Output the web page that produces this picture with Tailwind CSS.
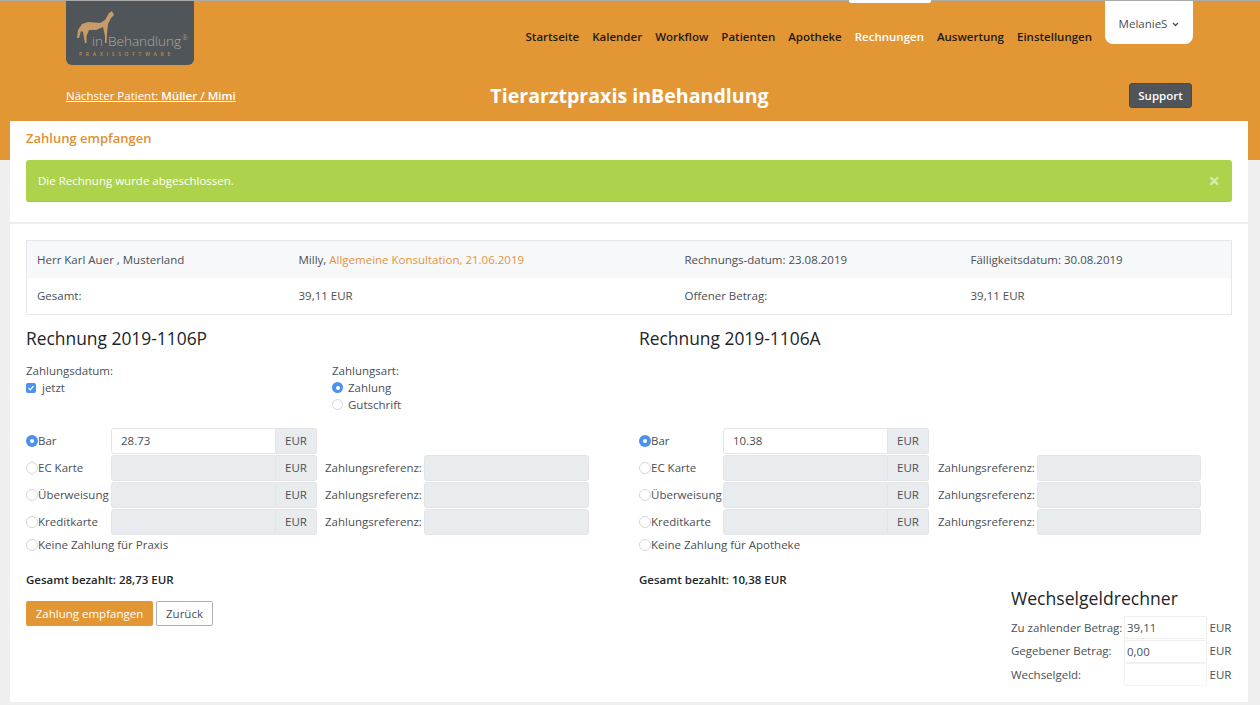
<!DOCTYPE html>
<html lang="de">
<head>
    <meta charset="UTF-8">
    <title>Zahlung empfangen</title>
    <script src="https://cdn.jsdelivr.net/npm/@tailwindcss/browser@4"></script>
</head>
<body class="bg-[#efefef] h-[705px] overflow-hidden font-['Open_Sans',sans-serif] text-[11.5px] text-[#4a4f55]">

    <!-- Kopfzeile -->
    <header class="h-[160px] bg-[#e39734] border-t border-[#aaaaaa] pl-[66px] pr-[67px]">
        <div class="flex h-[72px] items-start">
            <!-- Logo -->
            <div class="relative w-[128px] h-[64px] bg-[#50555a] rounded-b-[6px] text-[#b3a998] shrink-0">
                <svg width="40" height="35" viewBox="0 0 40 35" class="absolute left-[10px] top-[9px]">
                    <path d="M38 5 L36 1 L33 3 L29 10 L24 13 L12 12 L6 14 L2 20 L1 28 L3 28 L5 21 L7 22 L8 28 L9 33 L10.5 33 L10.5 26 L13 20 L20 20 L27 17 L29 26 L29 33 L30.5 33 L31 24 L32 14 L35 8 Z" fill="#c79c67"/>
                </svg>
                <div class="absolute left-[26px] top-[31px] flex text-[13.5px] leading-[18px] font-light whitespace-nowrap">
                    <span>in</span><span class="ml-[5px]">Behandlung</span><span class="text-[7px] leading-[10px] ml-[1px] mt-[1px]">®</span>
                </div>
                <div class="absolute left-[13px] top-[50px] text-[5px] leading-[7px] tracking-[3.7px] text-[#b8924f] font-semibold whitespace-nowrap">PRAXISSOFTWARE</div>
            </div>

            <!-- Navigation -->
            <nav class="ml-auto flex items-center gap-[13px] font-semibold text-[#1f1a14] mr-[13px] h-[71px] whitespace-nowrap">
                <a>Startseite</a>
                <a>Kalender</a>
                <a>Workflow</a>
                <a>Patienten</a>
                <a>Apotheke</a>
                <a class="relative text-white">Rechnungen
                    <span class="absolute left-[-6px] top-[-29px] w-[82px] h-[4px] bg-white rounded-b-[2px]"></span>
                </a>
                <a>Auswertung</a>
                <a>Einstellungen</a>
            </nav>
            <div class="w-[88px] h-[43px] bg-white rounded-b-[8px] flex items-center justify-center gap-[5px] pt-[3px] text-[#4a4f55]">
                MelanieS
                <svg width="7" height="5" viewBox="0 0 7 5"><path d="M1 1 L3.5 3.5 L6 1" fill="none" stroke="#4a4f55" stroke-width="1.3"/></svg>
            </div>
        </div>
        <div class="grid grid-cols-[1fr_auto_1fr] items-center h-[25px] mt-[8px]">
            <a class="text-white underline font-medium">Nächster Patient: <b class="font-semibold">Müller / Mimi</b></a>
            <div class="text-white text-[19.6px] font-bold">Tierarztpraxis inBehandlung</div>
            <div class="flex justify-end">
                <button class="w-[63px] h-[25px] mr-[1px] bg-[#50555a] text-white font-semibold rounded-[3px] border border-[#454a4e]">Support</button>
            </div>
        </div>
    </header>

    <!-- Inhalt -->
    <main class="relative -mt-[39px] ml-[10px] w-[1238px] h-[581px] bg-white">
        <div class="px-[16px]">
            <h1 class="h-[39px] pt-[7px] text-[#e08f33] text-[13px] font-semibold leading-[20px]">Zahlung empfangen</h1>
            <div class="h-[42px] bg-[#acd34b] border-b border-[#9fd02c] rounded-[3px] flex items-center justify-between pl-[12px] pr-[12px] pt-[1px] text-white">
                <span>Die Rechnung wurde abgeschlossen.</span>
                <span class="text-[#dcebb6] text-[20px] font-bold leading-none">×</span>
            </div>
        </div>
        <div class="border-b-2 border-[#eeeeee] h-[22px]"></div>

        <div class="px-[16px] pt-[16px]">
            <!-- Rechnungsdaten -->
            <table class="w-[1206px] border border-[#e5e7ea] table-fixed">
                <tbody>
                    <tr class="bg-[#f7f8f9] h-[37px]">
                        <td class="w-[262px] pl-[10px]">Herr Karl Auer , Musterland</td>
                        <td class="w-[386px] pl-[10px]">Milly, <a class="text-[#e8923c]">Allgemeine Konsultation, 21.06.2019</a></td>
                        <td class="w-[286px] pl-[10px]">Rechnungs-datum: 23.08.2019</td>
                        <td class="pl-[10px]">Fälligkeitsdatum: 30.08.2019</td>
                    </tr>
                    <tr class="h-[37px]">
                        <td class="pl-[10px]">Gesamt:</td>
                        <td class="pl-[10px]">39,11 EUR</td>
                        <td class="pl-[10px]">Offener Betrag:</td>
                        <td class="pl-[10px]">39,11 EUR</td>
                    </tr>
                </tbody>
            </table>

            <div class="grid grid-cols-[613px_593px]">
                <!-- Praxis -->
                <section>
                    <h2 class="text-[17.4px] leading-[24px] text-[#212529] mt-[11px]">Rechnung 2019-1106P</h2>
                    <div class="flex mt-[12px] h-[53px] leading-[17px]">
                        <div class="w-[306px]">
                            <div>Zahlungsdatum:</div>
                            <label class="flex items-center gap-[6px]">
                                <span class="w-[10px] h-[10px] rounded-[2px] bg-[#4d90f0] flex items-center justify-center">
                                    <svg width="8" height="8" viewBox="0 0 8 8"><path d="M1.5 4 L3.3 5.8 L6.5 2" fill="none" stroke="#fff" stroke-width="1.2"/></svg>
                                </span>
                                jetzt
                            </label>
                        </div>
                        <div>
                            <div>Zahlungsart:</div>
                            <label class="flex items-center gap-[5px]">
                                <span class="w-[11px] h-[11px] rounded-full bg-[#4d90f0] flex items-center justify-center"><span class="w-[4px] h-[4px] rounded-full bg-white"></span></span>
                                Zahlung
                            </label>
                            <label class="flex items-center gap-[5px]">
                                <span class="w-[11px] h-[11px] rounded-full border border-[#d5d7da]"></span>
                                Gutschrift
                            </label>
                        </div>
                    </div>
                    <div class="mt-[13px] flex flex-col gap-[1px]">
                        <div class="flex items-center h-[26px]">
                            <span class="w-[12px] h-[12px] rounded-full bg-[#4d90f0] flex items-center justify-center shrink-0"><span class="w-[4px] h-[4px] rounded-full bg-white"></span></span>
                            <span class="w-[73px]">Bar</span>
                            <div class="flex w-[206px] h-[26px]">
                                <div class="w-[165px] border border-[#e2e4e7] rounded-l-[3px] pl-[9px] leading-[24px]">28.73</div>
                                <div class="flex-1 bg-[#e9ecef] border border-[#e2e4e7] border-l-0 rounded-r-[3px] text-center leading-[24px]">EUR</div>
                            </div>
                        </div>
                        <div class="flex items-center h-[26px]">
                            <span class="w-[12px] h-[12px] rounded-full border border-[#d5d7da] shrink-0"></span>
                            <span class="w-[73px]">EC Karte</span>
                            <div class="flex w-[206px] h-[26px]">
                                <div class="w-[165px] bg-[#e9ecef] border border-[#e2e4e7] rounded-l-[3px]"></div>
                                <div class="flex-1 bg-[#e9ecef] border border-[#e2e4e7] border-l-0 rounded-r-[3px] text-center leading-[24px]">EUR</div>
                            </div>
                            <span class="w-[99px] ml-[8px] whitespace-nowrap">Zahlungsreferenz:</span>
                            <div class="w-[165px] h-[26px] bg-[#e9ecef] border border-[#e2e4e7] rounded-[3px]"></div>
                        </div>
                        <div class="flex items-center h-[26px]">
                            <span class="w-[12px] h-[12px] rounded-full border border-[#d5d7da] shrink-0"></span>
                            <span class="w-[73px] whitespace-nowrap">Überweisung</span>
                            <div class="flex w-[206px] h-[26px]">
                                <div class="w-[165px] bg-[#e9ecef] border border-[#e2e4e7] rounded-l-[3px]"></div>
                                <div class="flex-1 bg-[#e9ecef] border border-[#e2e4e7] border-l-0 rounded-r-[3px] text-center leading-[24px]">EUR</div>
                            </div>
                            <span class="w-[99px] ml-[8px] whitespace-nowrap">Zahlungsreferenz:</span>
                            <div class="w-[165px] h-[26px] bg-[#e9ecef] border border-[#e2e4e7] rounded-[3px]"></div>
                        </div>
                        <div class="flex items-center h-[26px]">
                            <span class="w-[12px] h-[12px] rounded-full border border-[#d5d7da] shrink-0"></span>
                            <span class="w-[73px]">Kreditkarte</span>
                            <div class="flex w-[206px] h-[26px]">
                                <div class="w-[165px] bg-[#e9ecef] border border-[#e2e4e7] rounded-l-[3px]"></div>
                                <div class="flex-1 bg-[#e9ecef] border border-[#e2e4e7] border-l-0 rounded-r-[3px] text-center leading-[24px]">EUR</div>
                            </div>
                            <span class="w-[99px] ml-[8px] whitespace-nowrap">Zahlungsreferenz:</span>
                            <div class="w-[165px] h-[26px] bg-[#e9ecef] border border-[#e2e4e7] rounded-[3px]"></div>
                        </div>
                        <div class="flex items-center h-[18px]">
                            <span class="w-[12px] h-[12px] rounded-full border border-[#d5d7da] shrink-0"></span>
                            <span>Keine Zahlung für Praxis</span>
                        </div>
                    </div>
                    <p class="mt-[17px] font-semibold text-[#212529] leading-[17px]">Gesamt bezahlt: 28,73 EUR</p>
                    <div class="flex gap-[3px] mt-[13px]">
                        <button class="w-[127px] h-[25px] bg-[#e39734] text-white font-medium rounded-[2px]">Zahlung empfangen</button>
                        <button class="w-[57px] h-[25px] border border-[#aeb1b4] rounded-[2px]">Zurück</button>
                    </div>
                </section>

                <!-- Apotheke -->
                <section>
                    <h2 class="text-[17.4px] leading-[24px] text-[#212529] mt-[11px]">Rechnung 2019-1106A</h2>
                    <div class="h-[53px] mt-[12px]"></div>
                    <div class="mt-[13px] flex flex-col gap-[1px]">
                        <div class="flex items-center h-[26px]">
                            <span class="w-[12px] h-[12px] rounded-full bg-[#4d90f0] flex items-center justify-center shrink-0"><span class="w-[4px] h-[4px] rounded-full bg-white"></span></span>
                            <span class="w-[72px]">Bar</span>
                            <div class="flex w-[206px] h-[26px]">
                                <div class="w-[165px] border border-[#e2e4e7] rounded-l-[3px] pl-[9px] leading-[24px]">10.38</div>
                                <div class="flex-1 bg-[#e9ecef] border border-[#e2e4e7] border-l-0 rounded-r-[3px] text-center leading-[24px]">EUR</div>
                            </div>
                        </div>
                        <div class="flex items-center h-[26px]">
                            <span class="w-[12px] h-[12px] rounded-full border border-[#d5d7da] shrink-0"></span>
                            <span class="w-[72px]">EC Karte</span>
                            <div class="flex w-[206px] h-[26px]">
                                <div class="w-[165px] bg-[#e9ecef] border border-[#e2e4e7] rounded-l-[3px]"></div>
                                <div class="flex-1 bg-[#e9ecef] border border-[#e2e4e7] border-l-0 rounded-r-[3px] text-center leading-[24px]">EUR</div>
                            </div>
                            <span class="w-[99px] ml-[9px] whitespace-nowrap">Zahlungsreferenz:</span>
                            <div class="w-[164px] h-[26px] bg-[#e9ecef] border border-[#e2e4e7] rounded-[3px]"></div>
                        </div>
                        <div class="flex items-center h-[26px]">
                            <span class="w-[12px] h-[12px] rounded-full border border-[#d5d7da] shrink-0"></span>
                            <span class="w-[72px] whitespace-nowrap">Überweisung</span>
                            <div class="flex w-[206px] h-[26px]">
                                <div class="w-[165px] bg-[#e9ecef] border border-[#e2e4e7] rounded-l-[3px]"></div>
                                <div class="flex-1 bg-[#e9ecef] border border-[#e2e4e7] border-l-0 rounded-r-[3px] text-center leading-[24px]">EUR</div>
                            </div>
                            <span class="w-[99px] ml-[9px] whitespace-nowrap">Zahlungsreferenz:</span>
                            <div class="w-[164px] h-[26px] bg-[#e9ecef] border border-[#e2e4e7] rounded-[3px]"></div>
                        </div>
                        <div class="flex items-center h-[26px]">
                            <span class="w-[12px] h-[12px] rounded-full border border-[#d5d7da] shrink-0"></span>
                            <span class="w-[72px]">Kreditkarte</span>
                            <div class="flex w-[206px] h-[26px]">
                                <div class="w-[165px] bg-[#e9ecef] border border-[#e2e4e7] rounded-l-[3px]"></div>
                                <div class="flex-1 bg-[#e9ecef] border border-[#e2e4e7] border-l-0 rounded-r-[3px] text-center leading-[24px]">EUR</div>
                            </div>
                            <span class="w-[99px] ml-[9px] whitespace-nowrap">Zahlungsreferenz:</span>
                            <div class="w-[164px] h-[26px] bg-[#e9ecef] border border-[#e2e4e7] rounded-[3px]"></div>
                        </div>
                        <div class="flex items-center h-[18px]">
                            <span class="w-[12px] h-[12px] rounded-full border border-[#d5d7da] shrink-0"></span>
                            <span>Keine Zahlung für Apotheke</span>
                        </div>
                    </div>
                    <p class="mt-[17px] font-semibold text-[#212529] leading-[17px]">Gesamt bezahlt: 10,38 EUR</p>

                    <!-- Wechselgeldrechner -->
                    <div class="ml-[372px] w-[221px] -mt-[2px]">
                        <h3 class="text-[17.6px] leading-[24px] text-[#212529]">Wechselgeldrechner</h3>
                        <div class="mt-[6px] flex flex-col gap-[0.5px]">
                            <div class="flex items-center h-[23px]">
                                <span class="w-[113px] whitespace-nowrap">Zu zahlender Betrag:</span>
                                <div class="w-[83px] h-[23px] border border-[#eeeeee] rounded-[2px] pl-[2px] leading-[21px]">39,11</div>
                                <span class="ml-[2.5px]">EUR</span>
                            </div>
                            <div class="flex items-center h-[23px]">
                                <span class="w-[113px] whitespace-nowrap">Gegebener Betrag:</span>
                                <div class="w-[83px] h-[23px] border border-[#eeeeee] rounded-[2px] pl-[2px] leading-[21px]">0,00</div>
                                <span class="ml-[2.5px]">EUR</span>
                            </div>
                            <div class="flex items-center h-[23px]">
                                <span class="w-[113px]">Wechselgeld:</span>
                                <div class="w-[83px] h-[23px] border border-[#f3f3f3] rounded-[2px]"></div>
                                <span class="ml-[2.5px]">EUR</span>
                            </div>
                        </div>
                    </div>
                </section>
            </div>
        </div>
    </main>

</body>
</html>
